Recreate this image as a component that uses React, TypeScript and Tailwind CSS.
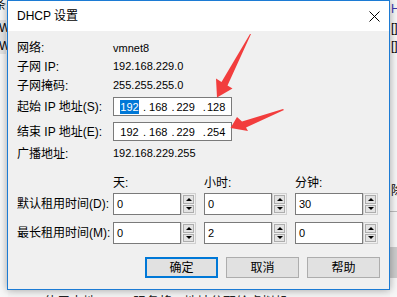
import React from "react";

const FONT = { fontFamily: '"Liberation Sans", "Noto Sans CJK SC", sans-serif' };

function Spin({ value }: { value: string }) {
  return (
    <div className="flex w-[91px]">
      <div className="w-[68px] h-[22px] border border-[#7a7a7a] bg-white text-[11px] pl-[3px] pt-[2px] leading-[16px]">
        {value}
      </div>
      <div className="w-[15px] h-[22px] border border-[#d0d0d0] bg-[#f0f0f0] flex flex-col gap-[1px] p-[1px]">
        <div className="flex-1 border border-[#adadad] bg-[#e3e3e3] flex items-center justify-center">
          <svg width="6" height="3" viewBox="0 0 6 3">
            <polygon points="0,3 6,3 3,0" fill="#000" />
          </svg>
        </div>
        <div className="flex-1 border border-[#adadad] bg-[#e3e3e3] flex items-center justify-center">
          <svg width="6" height="3" viewBox="0 0 6 3">
            <polygon points="0,0 6,0 3,3" fill="#000" />
          </svg>
        </div>
      </div>
    </div>
  );
}

function IpField({ last, selected }: { last: string; selected?: boolean }) {
  return (
    <div className="w-[119px] h-[19px] border border-[#7a7a7a] bg-white flex items-center text-[11px] leading-[14px]">
      <span
        className={
          "ml-[6px] w-[19px] h-[14px] flex items-center justify-center " +
          (selected ? "bg-[#0078d7] text-white" : "text-black")
        }
      >
        192
      </span>
      <span className="ml-[4px]">.</span>
      <span className="ml-[3px]">168</span>
      <span className="ml-[4px]">.</span>
      <span className="ml-[2px]">229</span>
      <span className="ml-[8px]">.</span>
      <span className="ml-[1px]">{last}</span>
    </div>
  );
}

function Btn({ label, primary }: { label: string; primary?: boolean }) {
  return (
    <div
      className={
        "w-[73px] h-[21px] bg-[#e1e1e1] flex items-center justify-center text-[12px] " +
        (primary ? "border-2 border-[#0078d7]" : "border border-[#adadad]")
      }
    >
      {label}
    </div>
  );
}

export default function App() {
  return (
    <div className="w-[397px] h-[297px] relative overflow-hidden bg-[#f4f4f4] text-black" style={FONT}>
      {/* backdrop fragments */}
      <div className="absolute left-0 top-0 w-[8px] h-[297px] bg-[#f7f7f7] overflow-hidden">
        <div className="absolute left-[-6px] top-[-4px] text-[12px]">条</div>
        <div className="absolute left-0 top-[20px] w-[6px] h-[34px] bg-[#e4e4e4]" />
        <div className="absolute left-[-1px] top-[19px] text-[12px]">W</div>
        <div className="absolute left-[-1px] top-[37px] text-[12px]">W</div>
      </div>
      <div className="absolute left-[390px] top-0 w-[7px] h-[297px] bg-[#f7f7f7] overflow-hidden">
        <div className="absolute left-[1px] top-[0px] text-[12px] text-[#3b3bb0]">H</div>
        <div className="absolute left-[1px] top-[19px] text-[12px]">[],</div>
        <div className="absolute left-[1px] top-[37px] text-[12px]">[],</div>
        <div className="absolute left-[1px] top-[182px] text-[12px]">除</div>
        <div className="absolute left-0 top-[211px] w-[7px] h-[1px] bg-[#bdbdbd]" />
        <div className="absolute left-0 top-[247px] w-[7px] h-[31px] bg-[#cccccc]" />
      </div>
      <div className="absolute left-[44px] top-[294px] text-[13px] leading-[16px] whitespace-nowrap text-[#222]">
        使用本地DHCP服务将IP地址分配给虚拟机
      </div>

      {/* dialog window */}
      <div className="absolute left-[7px] top-0 w-[383px] h-[290px] border border-[#1c7bd4] flex flex-col shadow-[0_0_8px_rgba(0,0,0,0.35)] bg-[#f0f0f0]">
        <div className="h-[30px] bg-white flex items-center pl-[9px] pr-[9px] text-[12px]">
          <span>DHCP 设置</span>
          <svg className="ml-auto" width="11" height="11" viewBox="0 0 11 11">
            <path d="M0.5 0.5 L10.5 10.5 M10.5 0.5 L0.5 10.5" stroke="#000" strokeWidth="1" />
          </svg>
        </div>
        <div className="flex-1 flex flex-col pl-[9px] pt-[8px] text-[12px]">
          <div className="flex items-center h-[18px]">
            <span className="w-[96px]">网络:</span>
            <span className="text-[11px]">vmnet8</span>
          </div>
          <div className="flex items-center h-[19px]">
            <span className="w-[96px]">子网 IP:</span>
            <span className="text-[11px]">192.168.229.0</span>
          </div>
          <div className="flex items-center h-[19px]">
            <span className="w-[96px]">子网掩码:</span>
            <span className="text-[11px]">255.255.255.0</span>
          </div>
          <div className="flex items-center mt-[2px]">
            <span className="w-[96px]">起始 IP 地址(S):</span>
            <IpField last="128" selected />
          </div>
          <div className="flex items-center mt-[6px]">
            <span className="w-[96px]">结束 IP 地址(E):</span>
            <IpField last="254" />
          </div>
          <div className="flex items-center h-[19px] mt-[3px]">
            <span className="w-[96px]">广播地址:</span>
            <span className="text-[11px]">192.168.229.255</span>
          </div>
          <div className="flex items-center h-[16px] mt-[12px]">
            <span className="w-[96px]" />
            <span className="w-[91px]">天:</span>
            <span className="w-[91px]">小时:</span>
            <span className="w-[91px]">分钟:</span>
          </div>
          <div className="flex items-center mt-[2px]">
            <span className="w-[96px]">默认租用时间(D):</span>
            <Spin value="0" />
            <Spin value="0" />
            <Spin value="30" />
          </div>
          <div className="flex items-center mt-[7px]">
            <span className="w-[96px]">最长租用时间(M):</span>
            <Spin value="0" />
            <Spin value="2" />
            <Spin value="0" />
          </div>
          <div className="flex justify-end gap-[8px] pr-[9px] mt-[13px]">
            <Btn label="确定" primary />
            <Btn label="取消" />
            <Btn label="帮助" />
          </div>
        </div>
      </div>

      {/* red annotation arrows */}
      <svg className="absolute left-0 top-0 pointer-events-none" width="397" height="297" viewBox="0 0 397 297">
        <polygon
          points="251,34 227.5,85.5 232.5,88.5 217,97.5 216,78.5 221.5,82 250,34"
          fill="#f23d3d"
        />
        <polygon
          points="284,110 246,127.5 248,131 230.5,128 237,117 242,121.5 283,109"
          fill="#f23d3d"
        />
      </svg>
    </div>
  );
}
